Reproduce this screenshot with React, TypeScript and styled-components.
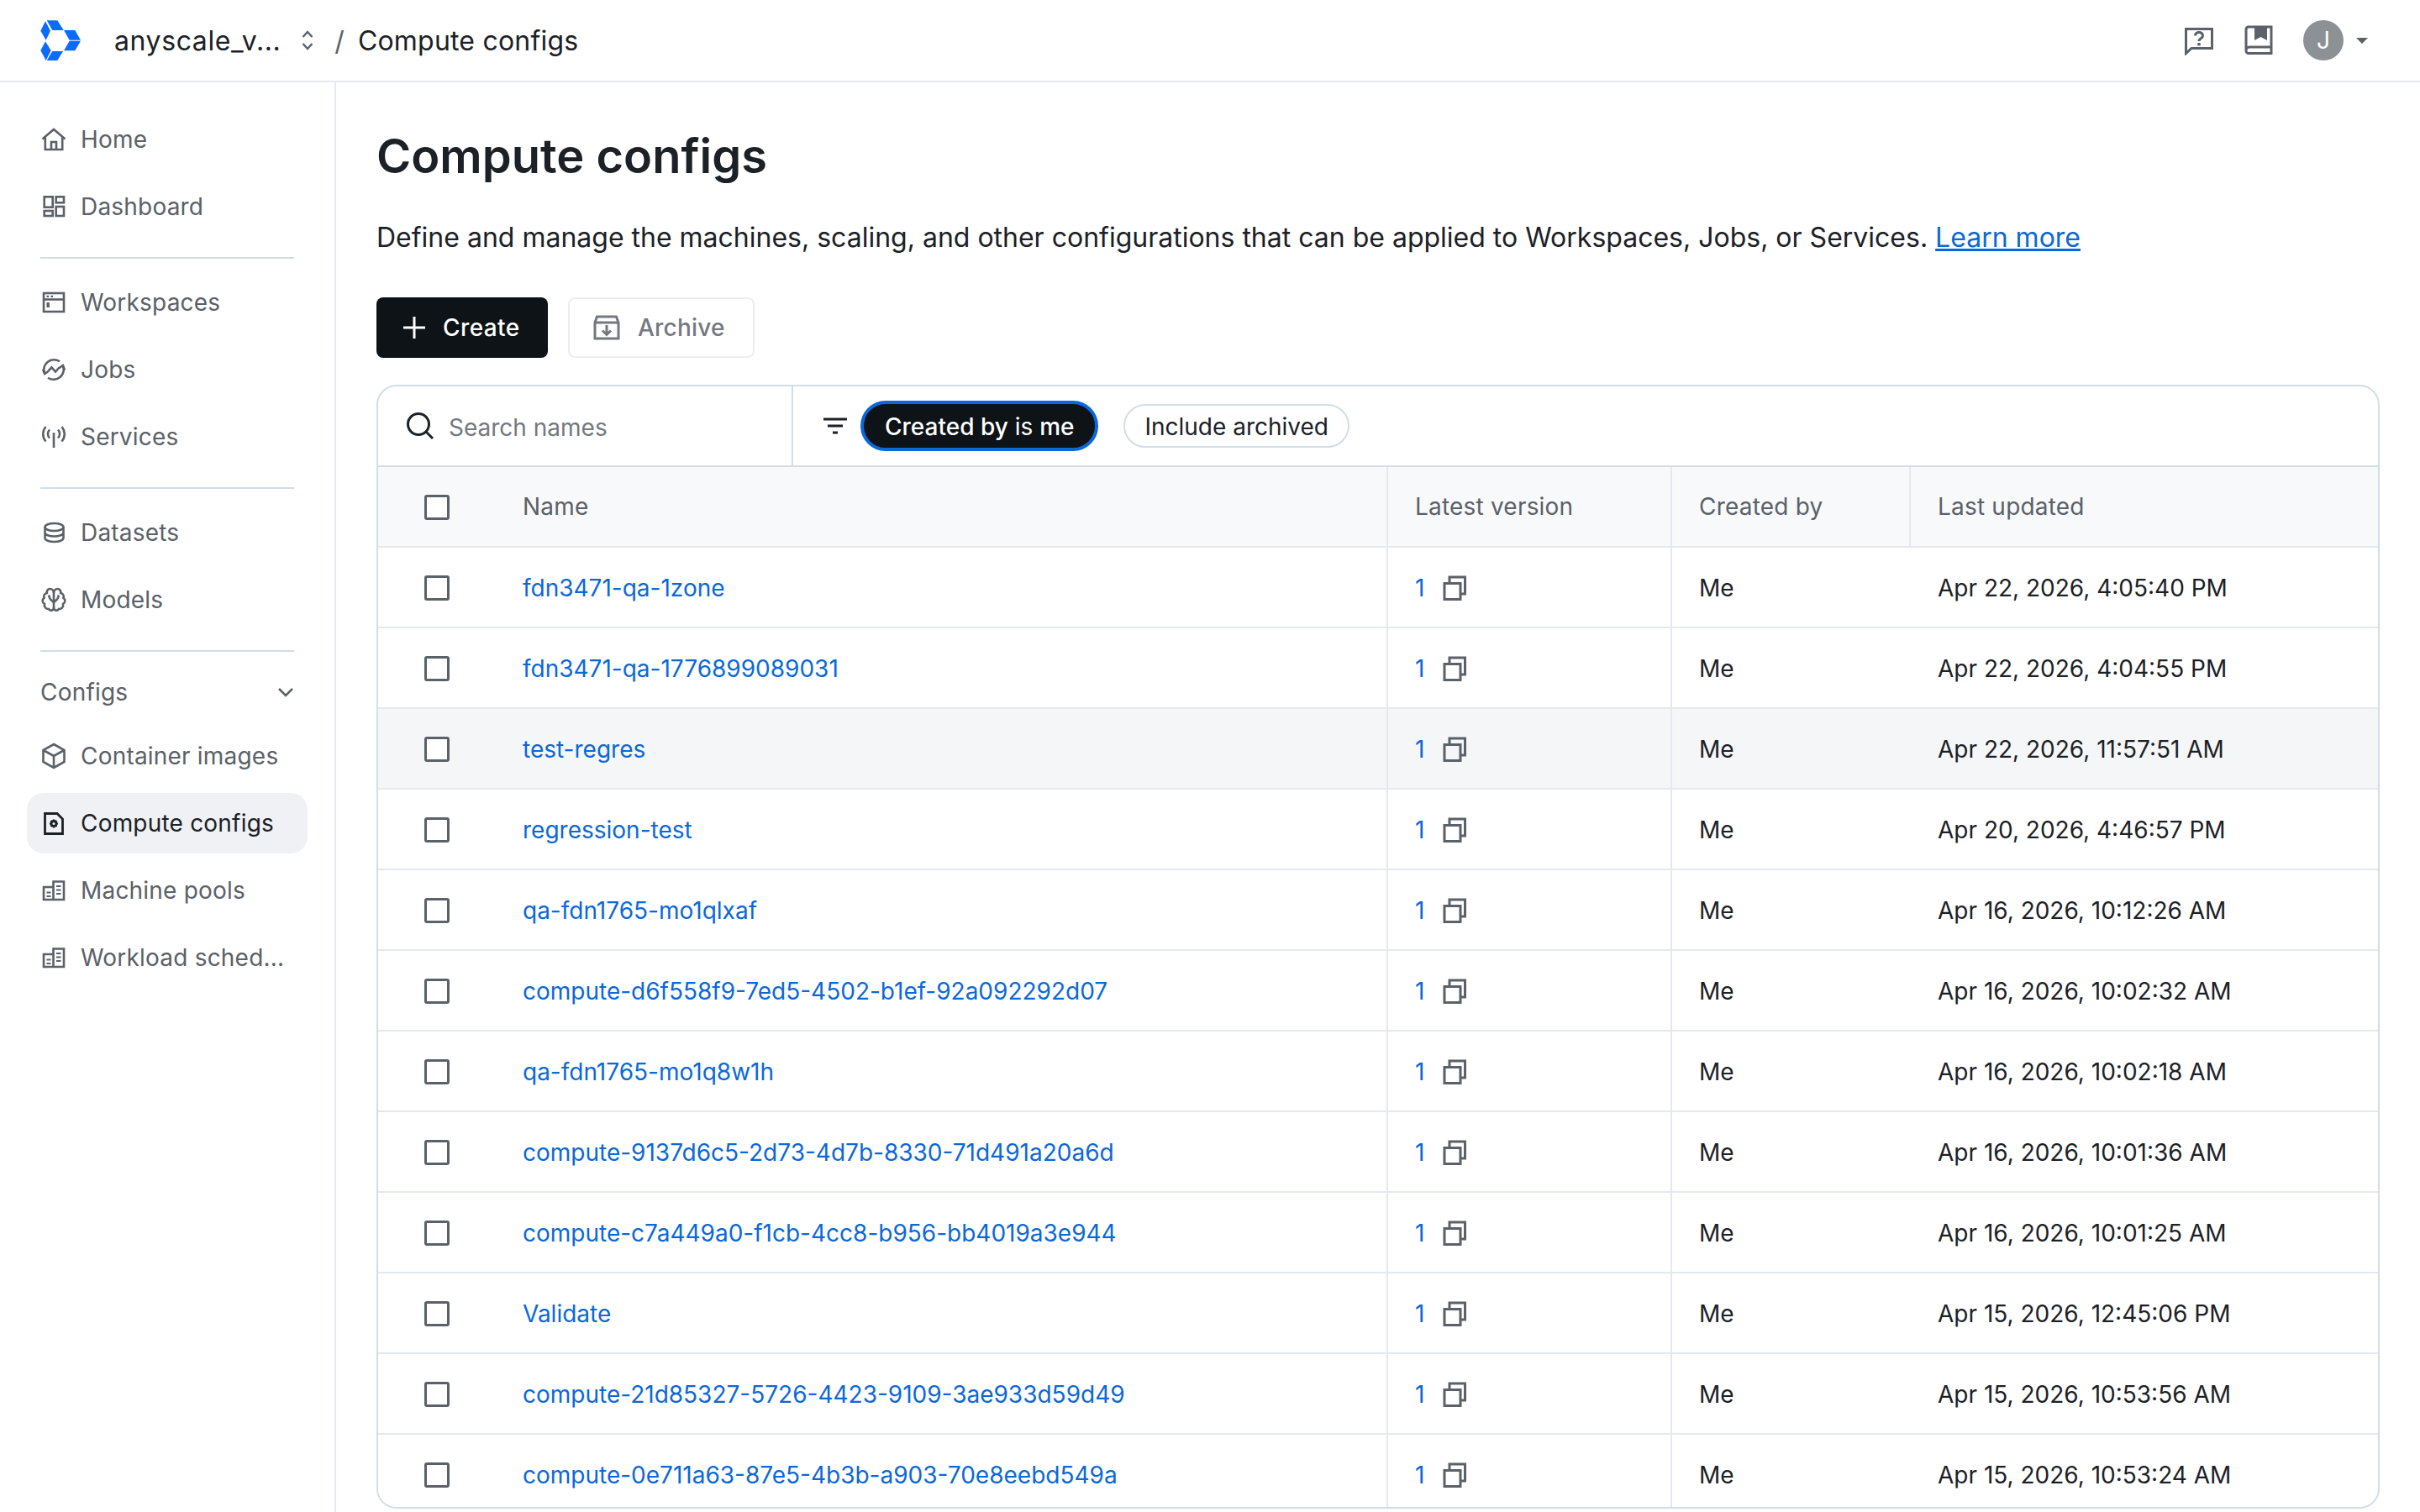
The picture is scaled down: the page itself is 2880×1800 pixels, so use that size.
import React from "react";
import styled, { createGlobalStyle } from "styled-components";

const Global = createGlobalStyle`
  html, body { margin: 0; padding: 0; background: #fff; }
  body { font-family: Inter, "Liberation Sans", sans-serif; color: #1b2126; }
  * { box-sizing: border-box; }
`;

const Page = styled.div`
  width: 2880px;
  height: 1800px;
  overflow: hidden;
  display: flex;
  flex-direction: column;
`;

const TopBar = styled.header`
  height: 98px;
  flex: none;
  border-bottom: 2px solid #e4e9ef;
  display: flex;
  align-items: center;
  padding: 0 62px 0 48px;
`;
const LogoMark = styled.svg`
  width: 48px;
  height: 48px;
  flex: none;
`;
const OrgName = styled.span`
  margin-left: 40px;
  font-size: 32px;
  letter-spacing: 0.6px;
  color: #1b2126;
`;
const Chevrons = styled.svg`
  width: 24px;
  height: 32px;
  margin-left: 20px;
  flex: none;
`;
const Slash = styled.span`
  margin-left: 20px;
  font-size: 32px;
  color: #5a6168;
`;
const Crumb = styled.span`
  margin-left: 16px;
  font-size: 32px;
  letter-spacing: 0.2px;
  color: #1b2126;
`;
const TopRight = styled.div`
  margin-left: auto;
  display: flex;
  align-items: center;
`;
const TopIcon = styled.svg`
  width: 36px;
  height: 36px;
  margin-right: 35px;
  flex: none;
`;
const Avatar = styled.div`
  width: 48px;
  height: 48px;
  border-radius: 50%;
  background: #8c9196;
  color: #fff;
  font-size: 28px;
  display: flex;
  align-items: center;
  justify-content: center;
`;
const Caret = styled.div`
  margin-left: 15px;
  width: 0;
  height: 0;
  border-left: 7px solid transparent;
  border-right: 7px solid transparent;
  border-top: 7px solid #5a6168;
`;

const Body = styled.div`
  flex: 1;
  display: flex;
  min-height: 0;
`;
const Sidebar = styled.nav`
  width: 400px;
  flex: none;
  border-right: 2px solid #e4e9ef;
  padding: 32px 32px 0 32px;
  display: flex;
  flex-direction: column;
`;
const NavItem = styled.div<{ $active?: boolean }>`
  height: 72px;
  flex: none;
  margin-bottom: 8px;
  padding: 0 16px;
  border-radius: 20px;
  display: flex;
  align-items: center;
  gap: 16px;
  font-size: 28px;
  letter-spacing: 0.2px;
  white-space: nowrap;
  color: ${(p) => (p.$active ? "#1b2126" : "#5a6168")};
  background: ${(p) => (p.$active ? "#eff1f4" : "transparent")};
`;
const NavIcon = styled.svg`
  width: 32px;
  height: 32px;
  flex: none;
`;
const NavRule = styled.hr`
  height: 2px;
  border: 0;
  margin: 16px 16px 16px 16px;
  flex: none;
  background: #d3dde8;
`;
const NavSection = styled.div`
  height: 64px;
  flex: none;
  margin: 0 16px 8px 16px;
  display: flex;
  align-items: center;
  justify-content: space-between;
  font-size: 28px;
  letter-spacing: 0.2px;
  color: #5a6168;
`;

const Main = styled.main`
  flex: 1;
  min-width: 0;
  padding: 52px 48px 0 48px;
`;
const Title = styled.h1`
  margin: 0;
  font-size: 56px;
  line-height: 72px;
  font-weight: 600;
  color: #1b2126;
`;
const Intro = styled.p`
  margin: 37px 0 0;
  font-size: 32px;
  line-height: 48px;
  color: #1b2126;
`;
const DocLink = styled.a`
  color: #0b68d8;
  text-decoration: underline;
`;
const Actions = styled.div`
  margin-top: 47px;
  display: flex;
  gap: 24px;
`;
const PrimaryButton = styled.button`
  width: 204px;
  height: 72px;
  border: 0;
  border-radius: 8px;
  background: #0d1317;
  color: #fff;
  font: 500 28px Inter, sans-serif;
  letter-spacing: 0.4px;
  display: flex;
  align-items: center;
  gap: 18px;
  padding: 0 0 0 29px;
`;
const GhostButton = styled.button`
  width: 222px;
  height: 72px;
  border: 2px solid #eceef1;
  border-radius: 8px;
  background: #fff;
  color: #74797f;
  font: 500 28px Inter, sans-serif;
  letter-spacing: 0.2px;
  display: flex;
  align-items: center;
  gap: 21px;
  padding: 0 0 0 28px;
`;
const ButtonIcon = styled.svg`
  width: 32px;
  height: 32px;
  flex: none;
`;

const TableCard = styled.section`
  margin-top: 32px;
  height: 1338px;
  border: 2px solid #d3dde8;
  border-radius: 24px;
  overflow: hidden;
`;
const Toolbar = styled.div`
  height: 96px;
  border-bottom: 2px solid #d3dde8;
  display: flex;
`;
const SearchCell = styled.div`
  width: 494px;
  flex: none;
  border-right: 2px solid #d3dde8;
  display: flex;
  align-items: center;
  gap: 16px;
  padding-left: 32px;
`;
const SearchIcon = styled.svg`
  width: 36px;
  height: 36px;
  flex: none;
`;
const SearchText = styled.span`
  font-size: 28px;
  color: #74797f;
  margin-top: 4px;
`;
const FilterCell = styled.div`
  flex: 1;
  display: flex;
  align-items: center;
  padding-left: 34px;
`;
const FilterIcon = styled.svg`
  width: 32px;
  height: 32px;
  flex: none;
  margin-right: 14px;
`;
const ActiveChip = styled.div`
  height: 60px;
  padding: 2px 25px 0;
  border-radius: 30px;
  border: 4px solid #0b68d8;
  background: #0d1317;
  color: #fff;
  font-size: 28px;
  display: flex;
  align-items: center;
  white-space: pre;
`;
const Strong = styled.span`
  font-weight: 500;
`;
const PlainChip = styled.div`
  margin-left: 30px;
  height: 52px;
  padding: 2px 23px 0;
  border-radius: 26px;
  border: 2px solid #d3dde8;
  color: #1b2126;
  font-size: 28px;
  display: flex;
  align-items: center;
`;

const COLUMNS = "140px 1062px 338px 284px 1fr";
const HeadRow = styled.div`
  height: 96px;
  display: grid;
  grid-template-columns: ${COLUMNS};
  background: #f8f9fb;
  border-bottom: 2px solid #e4e9ef;
`;
const HeadCell = styled.div<{ $rule?: boolean }>`
  padding-left: 32px;
  display: flex;
  align-items: center;
  font-size: 28px;
  letter-spacing: 0.2px;
  color: #5a6168;
  border-right: ${(p) => (p.$rule ? "2px solid #e4e9ef" : "0")};
`;
const Row = styled.div<{ $hover?: boolean }>`
  height: 96px;
  display: grid;
  grid-template-columns: ${COLUMNS};
  background: ${(p) => (p.$hover ? "#f5f6f8" : "#fff")};
  border-bottom: 2px solid #e4e9ef;
`;
const Cell = styled.div<{ $rule?: boolean }>`
  padding: 2px 0 0 32px;
  display: flex;
  align-items: center;
  font-size: 28px;
  color: #1b2126;
  white-space: nowrap;
  border-right: ${(p) => (p.$rule ? "2px solid #e4e9ef" : "0")};
`;
const CheckCell = styled.div`
  padding-top: 2px;
  display: flex;
  align-items: center;
  justify-content: center;
`;
const Box = styled.div`
  width: 30px;
  height: 30px;
  border: 3px solid #5a6168;
  border-radius: 3px;
  background: #fff;
`;
const NameLink = styled.a`
  color: #0b68d8;
`;
const VersionLink = styled.a`
  color: #0b68d8;
  width: 33px;
`;
const CopyIcon = styled.svg`
  width: 28px;
  height: 30px;
  flex: none;
`;

const S = { fill: "none", stroke: "#5a6168", strokeWidth: 2.6 } as const;

const icons: Record<string, React.ReactNode> = {
  home: <path {...S} d="M2.5 15.5 16 4l13.5 11.5M5.8 13v15h20.4V13M13 28v-9h6v9" />,
  dash: (
    <g {...S}>
      <rect x="4.7" y="4.3" width="10" height="12.4" />
      <rect x="18.7" y="4.3" width="9.3" height="7" />
      <rect x="4.7" y="21" width="10" height="6" />
      <rect x="18.7" y="16" width="9.3" height="11" />
    </g>
  ),
  work: (
    <g>
      <rect {...S} x="4" y="5" width="24" height="22" />
      <path {...S} d="M4 12.5h24" />
      <path fill="#5a6168" d="M7.5 7.7h2.6v2.2H7.5zM12.5 7.7h2.6v2.2h-2.6zM7.5 16h3.4v6H7.5z" />
    </g>
  ),
  jobs: (
    <g {...S}>
      <path d="M5.2 21A12 12 0 0 1 23 6.3M26.8 11A12 12 0 0 1 9 25.7" />
      <path d="m3 15.5 2.2 5.5 4.6-3.2M29 16.5 26.8 11l-4.6 3.2" />
      <path d="m9.5 17.5 4-4 4.5 5 4.5-5" />
    </g>
  ),
  serv: (
    <g {...S}>
      <path d="M16 14v15M11 7.5c-2.6 3-2.6 7 0 10M21 7.5c2.6 3 2.6 7 0 10M6.5 4c-4.4 5-4.4 12.5 0 17.5M25.5 4c4.4 5 4.4 12.5 0 17.5" />
      <circle cx="16" cy="12.5" r="1.6" fill="#5a6168" stroke="none" />
    </g>
  ),
  data: (
    <g {...S}>
      <ellipse cx="16.5" cy="9.5" rx="11" ry="4.5" />
      <path d="M5.5 9.5v13c0 2.500 5 4.500 11 4.500s11-2 11-4.500v-13M5.500 16c0 2.500 5 4.500 11 4.500s11-2 11-4.500" />
    </g>
  ),
  model: (
    <g {...S}>
      <path d="M16 8c0-3-2-5-4.500-5S7.500 5 7.800 8C5 8.500 3.500 11 4.500 13.800 2 15.500 2 19.500 5 21c-.8 3.500 1.800 6.500 5 6 1.500 2.500 6 2.500 6-2V8Z" />
      <path d="M16 8c0-3 2-5 4.500-5s4 2 3.700 5c2.800.5 4.300 3 3.300 5.800 2.500 1.700 2.500 5.700-.5 7.200.8 3.500-1.800 6.500-5 6-1.500 2.500-6 2.500-6-2" />
      <path d="m16 19-4.500-4M16 19l4.500-4M10 10.500l1.500 4.500M22 10.500 20.500 15" />
    </g>
  ),
  cube: <path {...S} d="M16 2 28.500 9v14L16 30 3.500 23V9ZM3.500 9 16 16l12.500-7M16 16v14" />,
  conf: (
    <g fill="none" stroke="#1b2126" strokeWidth="2.800">
      <path d="M5.500 4.500H20l6.500 6.500v17.500h-21Z" />
      <circle cx="16" cy="16.500" r="3" />
      <path strokeWidth="2.200" d="M16 11.500v2M16 19.500v2M11 16.500h2M19 16.500h2M12.500 13l1.400 1.400M18.100 18.600l1.400 1.400M12.500 20l1.400-1.400M18.100 14.400l1.400-1.400" />
    </g>
  ),
  pool: (
    <g {...S}>
      <path d="M4 12h11.500v15H4ZM15.500 5.500H28V27H15.500Z" />
      <path d="M7.500 18.500h5M7.500 23h5M19 11h5.500M19 15.500h5.500M19 20h5.500" strokeWidth="2.200" />
    </g>
  ),
};

const Nav = ({ icon, label, active }: { icon: string; label: string; active?: boolean }) => (
  <NavItem $active={active}>
    <NavIcon viewBox="0 0 32 32">{icons[icon]}</NavIcon>
    {label}
  </NavItem>
);

const rows = [
  ["fdn3471-qa-1zone", "Apr 22, 2026, 4:05:40 PM"],
  ["fdn3471-qa-1776899089031", "Apr 22, 2026, 4:04:55 PM"],
  ["test-regres", "Apr 22, 2026, 11:57:51 AM"],
  ["regression-test", "Apr 20, 2026, 4:46:57 PM"],
  ["qa-fdn1765-mo1qlxaf", "Apr 16, 2026, 10:12:26 AM"],
  ["compute-d6f558f9-7ed5-4502-b1ef-92a092292d07", "Apr 16, 2026, 10:02:32 AM"],
  ["qa-fdn1765-mo1q8w1h", "Apr 16, 2026, 10:02:18 AM"],
  ["compute-9137d6c5-2d73-4d7b-8330-71d491a20a6d", "Apr 16, 2026, 10:01:36 AM"],
  ["compute-c7a449a0-f1cb-4cc8-b956-bb4019a3e944", "Apr 16, 2026, 10:01:25 AM"],
  ["Validate", "Apr 15, 2026, 12:45:06 PM"],
  ["compute-21d85327-5726-4423-9109-3ae933d59d49", "Apr 15, 2026, 10:53:56 AM"],
  ["compute-0e711a63-87e5-4b3b-a903-70e8eebd549a", "Apr 15, 2026, 10:53:24 AM"],
];

export default function App() {
  return (
    <Page>
      <Global />
      <TopBar>
        <LogoMark viewBox="0 0 48 48">
          <g fill="#0b6bff">
            <path d="M6 1.300 12 12.700 6.700 23.700.3 12.700Z" />
            <path d="M6 25.300 12.700 36 6.700 48 .3 36Z" />
            <path d="M7.700.3H20.300L27.700 12H14.300Z" />
            <path d="M28 12H41.300L48 23.700H34.700Z" />
            <path d="M34.700 24.700H48L41.300 36.300H28Z" />
            <path d="M14.300 37H27L20.300 48H7.700Z" />
          </g>
        </LogoMark>
        <OrgName>anyscale_v...</OrgName>
        <Chevrons viewBox="0 0 24 32">
          <path fill="none" stroke="#5a6168" strokeWidth="2.500" d="m6.500 12 5.500-6 5.500 6M6.500 20l5.500 6 5.500-6" />
        </Chevrons>
        <Slash>/</Slash>
        <Crumb>Compute configs</Crumb>
        <TopRight>
          <TopIcon viewBox="0 0 36 36">
            <path fill="none" stroke="#5a6168" strokeWidth="3" d="M2.500 4.500h31v23H9l-6.500 6Z" />
            <path fill="none" stroke="#5a6168" strokeWidth="3" d="M13.500 12.500c0-5.500 9-5.500 9 0 0 3.500-4.500 3-4.500 6.500" />
            <path fill="#5a6168" d="M16.300 21h3.400v3.400h-3.400z" />
          </TopIcon>
          <TopIcon viewBox="0 0 36 36">
            <path fill="none" stroke="#5a6168" strokeWidth="3" d="M6 33.500a3 3 0 0 1-3-3V5a3 3 0 0 1 3-3h27v31.500ZM3 30a4 4 0 0 1 4-4h26" />
            <path fill="#5a6168" d="M13 3h15v15l-7.500-4-7.500 4Z" />
          </TopIcon>
          <Avatar>J</Avatar>
          <Caret />
        </TopRight>
      </TopBar>
      <Body>
        <Sidebar>
          <Nav icon="home" label="Home" />
          <Nav icon="dash" label="Dashboard" />
          <NavRule />
          <Nav icon="work" label="Workspaces" />
          <Nav icon="jobs" label="Jobs" />
          <Nav icon="serv" label="Services" />
          <NavRule />
          <Nav icon="data" label="Datasets" />
          <Nav icon="model" label="Models" />
          <NavRule />
          <NavSection>
            Configs
            <svg width="20" height="12" viewBox="0 0 20 12">
              <path fill="none" stroke="#5a6168" strokeWidth="2.500" d="m2 2 8 8 8-8" />
            </svg>
          </NavSection>
          <Nav icon="cube" label="Container images" />
          <Nav icon="conf" label="Compute configs" active />
          <Nav icon="pool" label="Machine pools" />
          <Nav icon="pool" label="Workload sched..." />
        </Sidebar>
        <Main>
          <Title>Compute configs</Title>
          <Intro>
            Define and manage the machines, scaling, and other configurations that can be applied to Workspaces, Jobs, or Services.{" "}
            <DocLink>Learn more</DocLink>
          </Intro>
          <Actions>
            <PrimaryButton>
              <ButtonIcon viewBox="0 0 32 32">
                <path fill="none" stroke="#fff" strokeWidth="3" d="M16 3v26M3 16h26" />
              </ButtonIcon>
              Create
            </PrimaryButton>
            <GhostButton>
              <ButtonIcon viewBox="0 0 32 32">
                <path fill="none" stroke="#74797f" strokeWidth="3" d="M2 10 4.500 3h23L30 10v19H2ZM2 10h28M16 13v11M11 19.500l5 5 5-5" />
              </ButtonIcon>
              Archive
            </GhostButton>
          </Actions>
          <TableCard>
            <Toolbar>
              <SearchCell>
                <SearchIcon viewBox="0 0 36 36">
                  <circle cx="16" cy="16" r="12.500" fill="none" stroke="#1b2126" strokeWidth="3" />
                  <path stroke="#1b2126" strokeWidth="3" d="m25 25 8 8" />
                </SearchIcon>
                <SearchText>Search names</SearchText>
              </SearchCell>
              <FilterCell>
                <FilterIcon viewBox="0 0 32 32">
                  <path stroke="#1b2126" strokeWidth="3" d="M2 8h28M7 16h18M13 24h6" />
                </FilterIcon>
                <ActiveChip>
                  <Strong>Created by</Strong> is <Strong>me</Strong>
                </ActiveChip>
                <PlainChip>Include archived</PlainChip>
              </FilterCell>
            </Toolbar>
            <HeadRow>
              <CheckCell>
                <Box />
              </CheckCell>
              <HeadCell $rule>Name</HeadCell>
              <HeadCell $rule>Latest version</HeadCell>
              <HeadCell $rule>Created by</HeadCell>
              <HeadCell>Last updated</HeadCell>
            </HeadRow>
            {rows.map(([name, date], i) => (
              <Row key={name} $hover={i === 2}>
                <CheckCell>
                  <Box />
                </CheckCell>
                <Cell $rule>
                  <NameLink>{name}</NameLink>
                </Cell>
                <Cell $rule>
                  <VersionLink>1</VersionLink>
                  <CopyIcon viewBox="0 0 28 30">
                    <path fill="none" stroke="#5a6168" strokeWidth="3" d="M2 9.500h19V28.500H2ZM8 9.500V2h18.500v20H21" />
                  </CopyIcon>
                </Cell>
                <Cell>Me</Cell>
                <Cell>{date}</Cell>
              </Row>
            ))}
          </TableCard>
        </Main>
      </Body>
    </Page>
  );
}
